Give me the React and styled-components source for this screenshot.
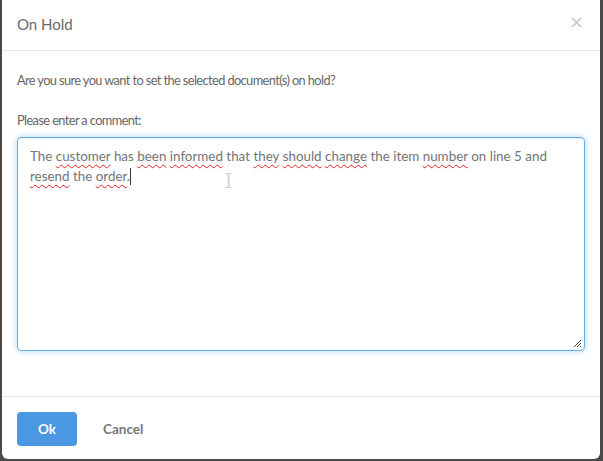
import React from 'react';
import styled, { createGlobalStyle } from 'styled-components';

const GlobalStyle = createGlobalStyle`
  html, body {
    margin: 0;
    padding: 0;
    background: #4a4a4a;
  }
  body {
    font-family: Lato, "Open Sans", sans-serif;
  }
`;

const Backdrop = styled.div`
  height: 461px;
  padding: 0 3px 2px 2px;
  box-sizing: border-box;
  display: flex;
  align-items: flex-end;
`;

const Modal = styled.div`
  width: 598px;
  height: 459px;
  background: #fff;
  border-radius: 0 0 6px 6px;
  display: flex;
  flex-direction: column;
  color: #666;
`;

const Header = styled.div`
  height: 51px;
  box-sizing: border-box;
  border-bottom: 1px solid #e5e5e5;
  display: flex;
  align-items: center;
  justify-content: space-between;
  padding: 0 16px 3px 15px;
`;

const Title = styled.h4`
  margin: 0;
  font-size: 15px;
  font-weight: 400;
  color: #6a6a6a;
`;

const Close = styled.button`
  border: 0;
  background: none;
  padding: 0;
  font-size: 18px;
  line-height: 1;
  color: #c8c8c8;
  font-family: "DejaVu Sans", sans-serif;
  cursor: pointer;
  margin-top: -3px;
`;

const Body = styled.div`
  flex: 1;
  padding: 19px 15px 0 15px;
  font-size: 12.8px;
  letter-spacing: -0.6px;
`;

const Text = styled.p`
  margin: 0 0 ${p => p.gap || 0}px;
  line-height: 20px;
`;

const Field = styled.div`
  position: relative;
  height: 214px;
  box-sizing: border-box;
  margin-top: 7px;
  padding: 8px 12px;
  border: 1px solid #66afe9;
  border-radius: 4px;
  box-shadow: inset 0 1px 1px rgba(0, 0, 0, 0.075), 0 0 6px rgba(102, 175, 233, 0.55);
  font-size: 13.4px;
  letter-spacing: 0;
  line-height: 20px;
  color: #747474;
`;

const Typo = styled.span`
  text-decoration: underline wavy #e02020;
  text-decoration-thickness: 1px;
  text-underline-offset: 3px;
  text-decoration-skip-ink: none;
`;

const Caret = styled.span`
  display: inline-block;
  width: 1px;
  height: 17px;
  background: #333;
  vertical-align: -4px;
`;

const Pointer = styled.svg`
  position: absolute;
  left: 207px;
  top: 35px;
`;

const Grip = styled.svg`
  position: absolute;
  right: 2px;
  bottom: 2px;
`;

const Footer = styled.div`
  height: 63px;
  box-sizing: border-box;
  border-top: 1px solid #e5e5e5;
  display: flex;
  align-items: flex-start;
  gap: 26px;
  padding: 15px 15px 0;
`;

const Button = styled.button`
  border: 0;
  border-radius: 4px;
  height: 34px;
  padding: 0 ${p => (p.primary ? 21 : 0)}px;
  min-width: ${p => (p.primary ? 59 : 0)}px;
  background: ${p => (p.primary ? '#4c97e2' : 'transparent')};
  color: ${p => (p.primary ? '#fff' : '#777')};
  font-family: Lato, "Open Sans", sans-serif;
  font-size: 13.5px;
  font-weight: 700;
  cursor: pointer;
`;

export default function App() {
  return (
    <>
      <GlobalStyle />
      <Backdrop>
        <Modal>
          <Header>
            <Title>On Hold</Title>
            <Close>×</Close>
          </Header>
          <Body>
            <Text gap={20}>Are you sure you want to set the selected document(s) on hold?</Text>
            <Text>Please enter a comment:</Text>
            <Field>
              The <Typo>customer</Typo> has <Typo>been</Typo> <Typo>informed</Typo> that{' '}
              <Typo>they</Typo> <Typo>should</Typo> <Typo>change</Typo> the item{' '}
              <Typo>number</Typo> on line 5 and <Typo>resend</Typo> the <Typo>order</Typo>.
              <Caret />
              <Pointer width="7" height="15" viewBox="0 0 7 15">
                <path d="M0.5 0.5h2.5v14H0.5M6.5 0.5H4v14h2.5" fill="none" stroke="#ccc" strokeWidth="1" />
              </Pointer>
              <Grip width="10" height="10" viewBox="0 0 10 10">
                <path d="M9 2L2 9M9 5L5 9M9 8L8 9" stroke="#444" strokeWidth="1" />
              </Grip>
            </Field>
          </Body>
          <Footer>
            <Button primary>Ok</Button>
            <Button>Cancel</Button>
          </Footer>
        </Modal>
      </Backdrop>
    </>
  );
}
